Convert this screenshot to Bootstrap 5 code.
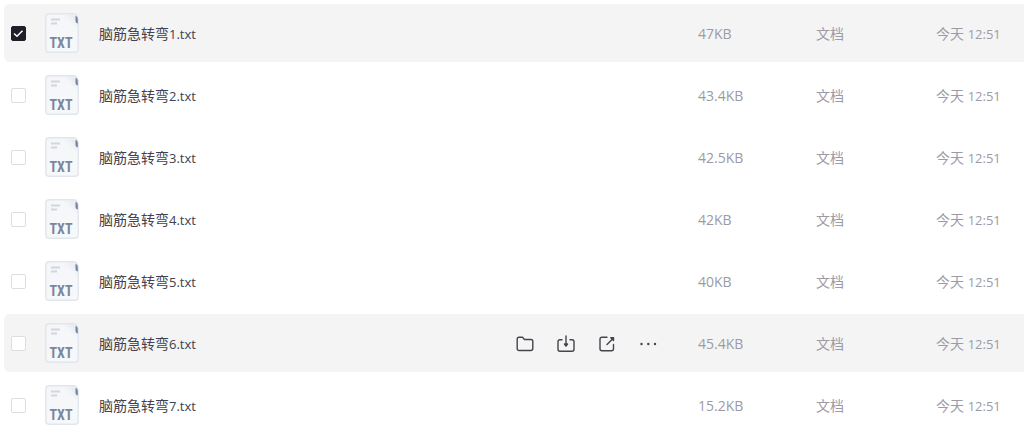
<!DOCTYPE html>
<html lang="zh-CN">
<head>
<meta charset="utf-8">
<meta name="viewport" content="width=device-width, initial-scale=1">
<title>文件列表</title>
<link href="https://cdn.jsdelivr.net/npm/bootstrap@5.3.0/dist/css/bootstrap.min.css" rel="stylesheet">
<style>
  body { font-family: "Open Sans", "Noto Sans CJK SC", sans-serif; font-size: 14px; line-height: 20px; color: #41414f; background: #fff; overflow-x: hidden; }
  .file-table { table-layout: fixed; border-collapse: separate; border-spacing: 0 4px; color: inherit; }
  .file-table td { height: 58px; padding: 0; border: 0; white-space: nowrap; }
  .file-table td:first-child { border-radius: 6px 0 0 6px; padding-left: 7px; }
  .file-table td.meta, .file-table td.tools { padding-top: 1px; }
  .file-table tr.is-active td { background: #f4f4f4; }
  .col-check { width: 41px; }
  .col-tools { width: 183px; }
  .col-size { width: 118px; }
  .col-kind { width: 120px; }
  .col-time { width: 88px; }
  .latin { font-size: 13px; }
  .meta { color: #9b9ba6; }
  .file-check.form-check-input { width: 15px; height: 15px; margin: 0; border: 1px solid #dedee2; border-radius: 2px; background-color: #fff; }
  .file-check.form-check-input:checked { background-color: #1f1f29; border-color: #1f1f29; background-size: 13px; background-image: url("data:image/svg+xml,%3Csvg xmlns='http://www.w3.org/2000/svg' viewBox='0 0 13 13'%3E%3Cpath d='M2 6.500L5 9.300L10.500 3.700' fill='none' stroke='%23fff' stroke-width='1.500'/%3E%3C/svg%3E"); }
  .file-icon { width: 34px; height: 40px; flex: none; }
  .file-name { padding-top: 2px; }
  .tool-list { gap: 23px; padding-left: 1px; }
  .tool-btn { width: 18px; height: 18px; color: #44444c; line-height: 1; }
  .tool-btn svg { width: 18px; height: 18px; display: block; }
</style>
</head>
<body>
<svg class="position-absolute" width="0" height="0" aria-hidden="true">
  <defs>
    <linearGradient id="paper" x1="0" y1="0" x2="1" y2="1">
      <stop offset="0" stop-color="#f4f6f9"/><stop offset="1" stop-color="#f7f8fa"/>
    </linearGradient>
    <linearGradient id="fold" x1="0" y1="1" x2="1" y2="0">
      <stop offset="0.4" stop-color="#e6e9ef" stop-opacity="0"/><stop offset="1" stop-color="#dfe3ea"/>
    </linearGradient>
  </defs>
</svg>
<main class="ps-1">
  <table class="file-table table mb-0 align-middle w-100">
    <colgroup><col class="col-check"><col><col class="col-tools"><col class="col-size"><col class="col-kind"><col class="col-time"></colgroup>
    <tbody id="files"></tbody>
  </table>
</main>

<template id="row">
  <tr>
    <td><input class="file-check form-check-input d-block" type="checkbox"></td>
    <td>
      <div class="d-flex align-items-center">
        <svg class="file-icon" viewBox="0 0 34 40" aria-hidden="true">
          <path d="M4 .8H28Q30.500 .8 31.500 2L32.500 4Q33.200 5 33.200 7V36Q33.200 39.200 30 39.200H4Q.8 39.200 .8 36V4Q.8 .8 4 .8Z" fill="url(#paper)" stroke="#e1e5ec" stroke-width="1.400"/>
          <path d="M19 1.500H28L32 6V15H19Z" fill="url(#fold)"/>
          <path d="M30.500 2.500Q32.800 3.500 32.800 6V10.500Q30.500 10 30.500 8Z" fill="#77849e"/>
          <path d="M6 6.500H15M6 10.500H12" stroke="#d2d5dc" stroke-width="1.800"/>
          <text x="16" y="35" text-anchor="middle" font-family="Roboto Condensed, Roboto, sans-serif" font-weight="700" font-size="14" fill="#7a879d">TXT</text>
        </svg>
        <label class="file-name ms-3 ps-1"></label>
      </div>
    </td>
    <td class="tools"></td>
    <td class="meta size"></td>
    <td class="meta">文档</td>
    <td class="meta">今天 <span class="latin">12:51</span></td>
  </tr>
</template>

<template id="actions">
  <div class="tool-list d-flex align-items-center">
    <button type="button" class="tool-btn btn border-0 p-0" aria-label="移动"><svg viewBox="0 0 18 18" fill="none" stroke="currentColor" stroke-width="1.400" stroke-linejoin="round"><path d="M3 2.300H6.500L8.500 4.500H15Q16.800 4.500 16.800 6.300V13.500Q16.800 15.500 14.800 15.500H3.200Q1.200 15.500 1.200 13.500V4.100Q1.200 2.300 3 2.300Z"/></svg></button>
    <button type="button" class="tool-btn btn border-0 p-0" aria-label="下载"><svg viewBox="0 0 18 18" fill="none" stroke="currentColor" stroke-width="1.400" stroke-linecap="round"><path d="M5 4.700H3Q1 4.700 1 6.700V14.300Q1 16.300 3 16.300H15Q17 16.300 17 14.300V6.700Q17 4.700 15 4.700H13M9 1V10"/><path d="M7.500 9H10.500L9 11.200Z" fill="currentColor" stroke-linejoin="round"/></svg></button>
    <button type="button" class="tool-btn btn border-0 p-0" aria-label="分享"><svg viewBox="0 0 18 18" fill="none" stroke="currentColor" stroke-width="1.400" stroke-linecap="round"><path d="M9 2.300H4Q2 2.300 2 4.300V13.700Q2 15.700 4 15.700H13.500Q15.500 15.700 15.500 13.700V9.500M9 9.500L14.500 4"/><path d="M12.800 2.800H15.500V5.500Z" fill="currentColor" stroke-linejoin="round"/></svg></button>
    <button type="button" class="tool-btn btn border-0 p-0" aria-label="更多"><svg viewBox="0 0 18 18" fill="currentColor"><circle cx="2.500" cy="9" r="1.200"/><circle cx="9.300" cy="9" r="1.200"/><circle cx="16" cy="9" r="1.200"/></svg></button>
  </div>
</template>

<script src="https://cdn.jsdelivr.net/npm/bootstrap@5.3.0/dist/js/bootstrap.bundle.min.js"></script>
<script>
  const sizes = ['47KB', '43.4KB', '42.5KB', '42KB', '40KB', '45.4KB', '15.2KB'];
  const body = document.getElementById('files');
  sizes.forEach((size, i) => {
    const n = i + 1;
    const row = document.getElementById('row').content.cloneNode(true);
    const check = row.querySelector('input');
    const label = row.querySelector('label');
    check.id = label.htmlFor = 'file-' + n;
    check.checked = n === 1;
    label.innerHTML = `脑筋急转弯<span class="latin">${n}.txt</span>`;
    row.querySelector('.size').textContent = size;
    if (n === 1 || n === 6) row.querySelector('tr').classList.add('is-active');
    if (n === 6) row.querySelector('.tools').append(document.getElementById('actions').content.cloneNode(true));
    body.append(row);
  });
</script>
</body>
</html>
